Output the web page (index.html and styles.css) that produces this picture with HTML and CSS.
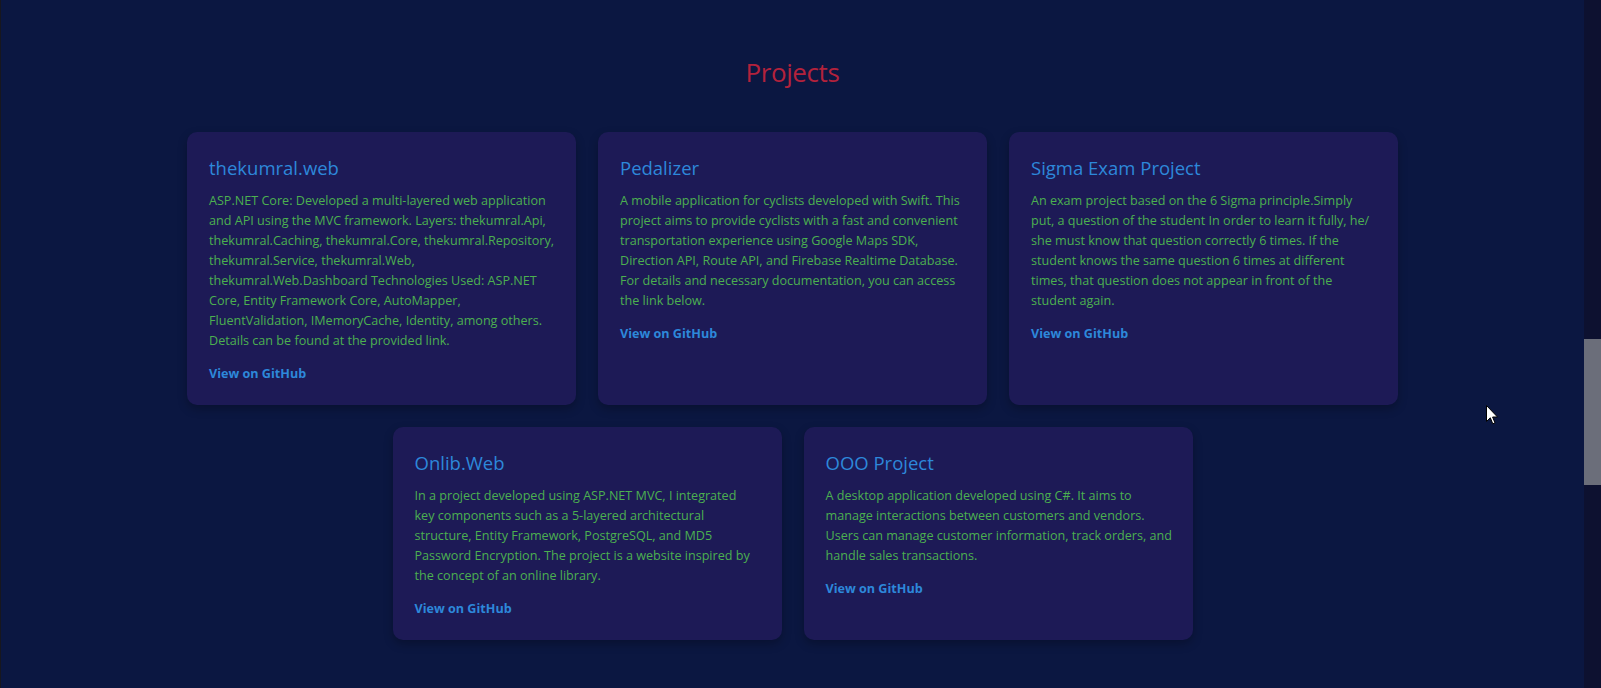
FILE: index.html
```html
<!DOCTYPE html>
<html lang="en">
<head>
<meta charset="utf-8">
<title>Projects</title>
<link rel="stylesheet" href="styles.css">
</head>
<body>
<div class="edge"></div>
<main class="page">
  <section class="projects">
    <h2 class="section-title">Projects</h2>
    <div class="cards">
      <article class="card">
        <h3 class="card-title">thekumral.web</h3>
        <p class="card-text">ASP.NET Core: Developed a multi-layered web application<br>and API using the MVC framework. Layers: thekumral.Api,<br>thekumral.Caching, thekumral.Core, thekumral.Repository,<br>thekumral.Service, thekumral.Web,<br>thekumral.Web.Dashboard Technologies Used: ASP.NET<br>Core, Entity Framework Core, AutoMapper,<br>FluentValidation, IMemoryCache, Identity, among others.<br>Details can be found at the provided link.</p>
        <a class="card-link" href="#">View on GitHub</a>
      </article>
      <article class="card">
        <h3 class="card-title">Pedalizer</h3>
        <p class="card-text">A mobile application for cyclists developed with Swift. This<br>project aims to provide cyclists with a fast and convenient<br>transportation experience using Google Maps SDK,<br>Direction API, Route API, and Firebase Realtime Database.<br>For details and necessary documentation, you can access<br>the link below.</p>
        <a class="card-link" href="#">View on GitHub</a>
      </article>
      <article class="card">
        <h3 class="card-title">Sigma Exam Project</h3>
        <p class="card-text">An exam project based on the 6 Sigma principle.Simply<br>put, a question of the student In order to learn it fully, he/<br>she must know that question correctly 6 times. If the<br>student knows the same question 6 times at different<br>times, that question does not appear in front of the<br>student again.</p>
        <a class="card-link" href="#">View on GitHub</a>
      </article>
      <article class="card">
        <h3 class="card-title">Onlib.Web</h3>
        <p class="card-text">In a project developed using ASP.NET MVC, I integrated<br>key components such as a 5-layered architectural<br>structure, Entity Framework, PostgreSQL, and MD5<br>Password Encryption. The project is a website inspired by<br>the concept of an online library.</p>
        <a class="card-link" href="#">View on GitHub</a>
      </article>
      <article class="card">
        <h3 class="card-title">OOO Project</h3>
        <p class="card-text">A desktop application developed using C#. It aims to<br>manage interactions between customers and vendors.<br>Users can manage customer information, track orders, and<br>handle sales transactions.</p>
        <a class="card-link" href="#">View on GitHub</a>
      </article>
    </div>
  </section>
  <svg class="cursor" width="13" height="21" viewBox="0 0 13 21" aria-hidden="true">
    <path d="M0.5 0.5 L0.5 16.5 L4.3 12.8 L6.8 18.8 L9 17.9 L6.6 12 L11.5 12 Z" fill="#fff" stroke="#000" stroke-width="1"/>
  </svg>
</main>
<aside class="scrollbar"><div class="thumb"></div></aside>
</body>
</html>
```
FILE: styles.css
```css
html, body {
  margin: 0;
  padding: 0;
  height: 100%;
}
body {
  display: flex;
  overflow: hidden;
  background: #0b1741;
  font-family: "Open Sans", "Noto Sans", sans-serif;
}
.edge {
  width: 1px;
  flex: none;
  background: #17171f;
}
.page {
  flex: 1;
  position: relative;
}
.projects {
  padding-top: 54px;
}
.section-title {
  margin: 0 0 42px;
  text-align: center;
  font-size: 26px;
  line-height: 36px;
  font-weight: 400;
  letter-spacing: -0.4px;
  color: #b3223c;
}
.cards {
  width: 1211px;
  margin: 0 auto;
  display: flex;
  flex-wrap: wrap;
  justify-content: center;
  gap: 22px;
}
.card {
  width: 389px;
  box-sizing: border-box;
  padding: 24px 12px 21px 22px;
  background: #1d1a56;
  border-radius: 10px;
  box-shadow: 0 4px 10px rgba(0, 0, 0, 0.25);
  display: flex;
  flex-direction: column;
  align-items: flex-start;
}
.card-title {
  margin: 0 0 11px;
  font-size: 18.5px;
  line-height: 24px;
  font-weight: 400;
  color: #2d88da;
}
.card-text {
  margin: 0 0 13px;
  font-size: 12.6px;
  line-height: 20px;
  color: #4cb050;
}
.card-link {
  font-size: 12.6px;
  line-height: 20px;
  font-weight: 700;
  color: #2d88da;
  text-decoration: none;
}
.cursor {
  position: absolute;
  left: 1485px;
  top: 405px;
}
.scrollbar {
  width: 17px;
  flex: none;
  background: #0d1130;
  padding-top: 339px;
  box-sizing: border-box;
}
.thumb {
  height: 146px;
  background: #6b6e7a;
}
```
